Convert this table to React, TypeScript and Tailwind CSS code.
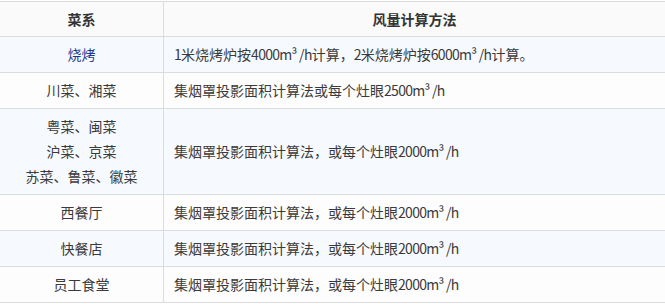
import React from 'react';

interface Row {
    cuisine: React.ReactNode;
    method: string;
    tint: boolean;
}

const rows: Row[] = [
    { cuisine: <span className="text-[#1f3a8c]">烧烤</span>, method: '1米烧烤炉按4000m³ /h计算，2米烧烤炉按6000m³ /h计算。', tint: true },
    { cuisine: '川菜、湘菜', method: '集烟罩投影面积计算法或每个灶眼2500m³ /h', tint: false },
    {
        cuisine: (
            <>
                粤菜、闽菜<br />沪菜、京菜<br />苏菜、鲁菜、徽菜
            </>
        ),
        method: '集烟罩投影面积计算法，或每个灶眼2000m³ /h',
        tint: true,
    },
    { cuisine: '西餐厅', method: '集烟罩投影面积计算法，或每个灶眼2000m³ /h', tint: false },
    { cuisine: '快餐店', method: '集烟罩投影面积计算法，或每个灶眼2000m³ /h', tint: true },
    { cuisine: '员工食堂', method: '集烟罩投影面积计算法，或每个灶眼2000m³ /h', tint: false },
];

// latin runs are a bit narrower in the original, tighten them
const Method = ({ text }: { text: string }) => (
    <span>
        {text.split(/([0-9a-z³ /]+)/).map((part, i) =>
            i % 2 === 1 ? (
                <span key={i} className="tracking-[-0.7px]">{part}</span>
            ) : (
                <React.Fragment key={i}>{part}</React.Fragment>
            )
        )}
    </span>
);

export default function App() {
    return (
        <div className="w-[665px] h-[304px] bg-white pt-px text-[14px] text-[#3a3a3a] font-['Noto_Sans_CJK_SC',sans-serif]">
            <div className="grid grid-cols-[164px_1fr] border-t border-[#dcdcdc]">
                {/* header */}
                <div className="bg-[#fafafa] border-b border-r border-[#dcdcdc] py-[5px] leading-[24px] text-center font-bold text-[#333]">
                    菜系
                </div>
                <div className="bg-[#fafafa] border-b border-[#dcdcdc] py-[5px] leading-[24px] text-center font-bold text-[#333]">
                    风量计算方法
                </div>

                {rows.map((row, i) => {
                    const bg = row.tint ? 'bg-[#f6f9fe]' : 'bg-[#fdfdfd]';
                    return (
                        <React.Fragment key={i}>
                            <div className={`${bg} border-b border-r border-[#dcdcdc] py-[5px] leading-[25px] text-center flex flex-col justify-center`}>
                                <div>{row.cuisine}</div>
                            </div>
                            <div className={`${bg} border-b border-[#dcdcdc] py-[5px] leading-[25px] pl-[10px] flex items-center`}>
                                <Method text={row.method} />
                            </div>
                        </React.Fragment>
                    );
                })}
            </div>
        </div>
    );
}
